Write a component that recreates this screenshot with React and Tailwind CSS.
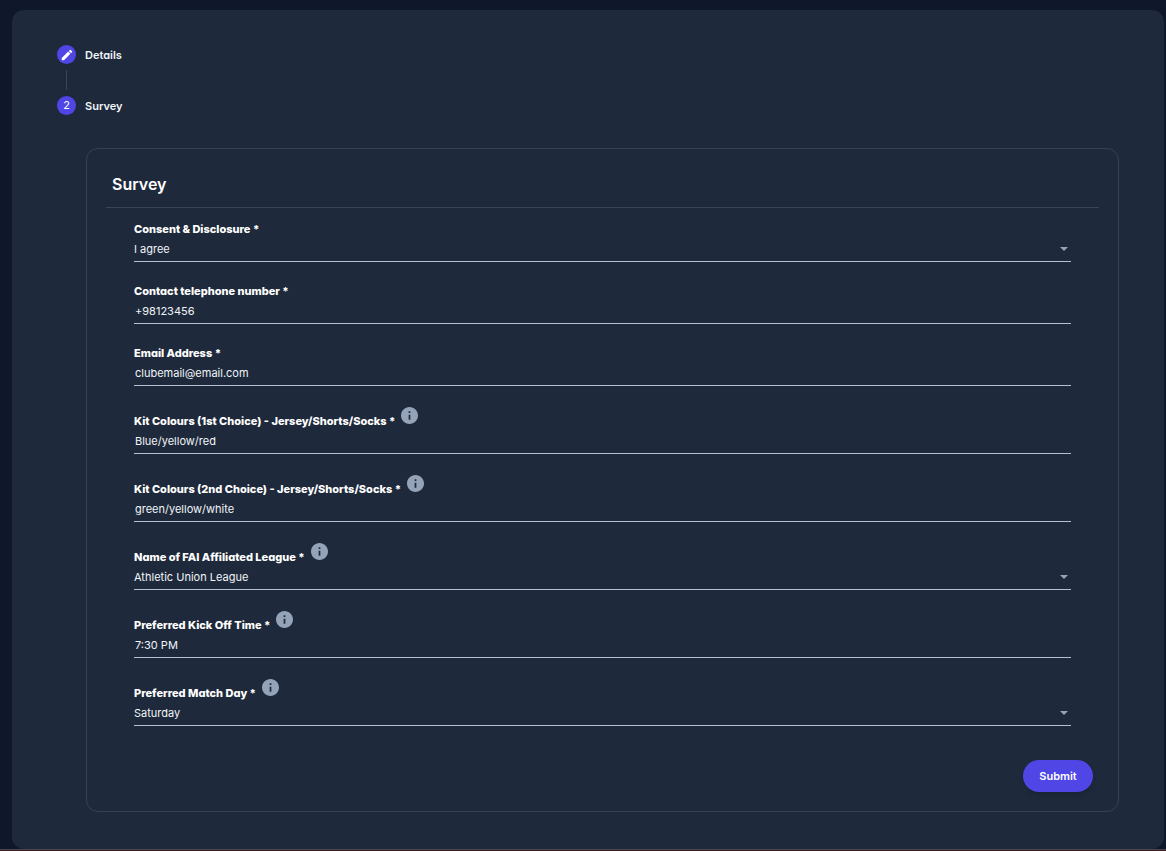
import React, { useState } from 'react';

const fields = [
  { id: 'consent', label: 'Consent & Disclosure', type: 'select', value: 'I agree', options: ['I agree', 'I do not agree'] },
  { id: 'phone', label: 'Contact telephone number', type: 'tel', value: '+98123456' },
  { id: 'email', label: 'Email Address', type: 'email', value: 'clubemail@email.com' },
  { id: 'kitFirst', label: 'Kit Colours (1st Choice) - Jersey/Shorts/Socks', type: 'text', value: 'Blue/yellow/red', info: true },
  { id: 'kitSecond', label: 'Kit Colours (2nd Choice) - Jersey/Shorts/Socks', type: 'text', value: 'green/yellow/white', info: true },
  { id: 'league', label: 'Name of FAI Affiliated League', type: 'select', value: 'Athletic Union League', options: ['Athletic Union League'], info: true },
  { id: 'kickOff', label: 'Preferred Kick Off Time', type: 'text', value: '7:30 PM', info: true },
  { id: 'matchDay', label: 'Preferred Match Day', type: 'select', value: 'Saturday', options: ['Saturday', 'Sunday'], info: true },
];

const InfoIcon = () => (
  <svg viewBox="2 2 20 20" className="w-[17px] h-[17px] shrink-0 text-[#94a3b8]" fill="currentColor" aria-hidden="true">
    <path d="M12 2C6.48 2 2 6.48 2 12s4.48 10 10 10 10-4.48 10-10S17.52 2 12 2zm1 15h-2v-6h2v6zm0-8h-2V7h2v2z" />
  </svg>
);

const PencilIcon = () => (
  <svg viewBox="0 0 24 24" className="w-[14px] h-[14px]" fill="currentColor" aria-hidden="true">
    <path d="M3 17.25V21h3.75L17.81 9.94l-3.75-3.75L3 17.25zM20.71 7.04a.996.996 0 0 0 0-1.41l-2.34-2.34a.996.996 0 0 0-1.41 0l-1.83 1.83 3.75 3.75 1.83-1.83z" />
  </svg>
);

const Step = ({ icon, label }) => (
  <li className="flex items-center gap-[9px] h-[19px]">
    <span className="flex items-center justify-center w-[19px] h-[19px] rounded-full bg-[#4f46e5] text-white text-[11px]">
      {icon}
    </span>
    <span className="text-[11px] leading-5 font-semibold [font-feature-settings:'cv11']">{label}</span>
  </li>
);

const Field = ({ field, value, onChange }) => (
  <div>
    <div className={field.info ? 'flex gap-[6px] h-[23px]' : 'flex h-[17px]'}>
      <label
        htmlFor={field.id}
        className="self-end text-[11px] leading-[17px] font-extrabold text-white [font-feature-settings:'cv11']"
      >
        {field.label} *
      </label>
      {field.info && <InfoIcon />}
    </div>
    <div className="relative h-6 border-b border-[#b4c0ce]">
      {field.type === 'select' ? (
        <>
          <select
            id={field.id}
            value={value}
            onChange={(e) => onChange(field.id, e.target.value)}
            className="block w-full h-[22px] appearance-none bg-transparent text-[11px] focus:outline-none"
          >
            {field.options.map((option) => (
              <option key={option} value={option}>{option}</option>
            ))}
          </select>
          <svg viewBox="0 0 8 4" className="absolute right-[3px] top-[9px] w-2 h-1 pointer-events-none text-[#94a3b8]" fill="currentColor">
            <path d="M0 0h8L4 4z" />
          </svg>
        </>
      ) : (
        <input
          id={field.id}
          type={field.type}
          value={value}
          onChange={(e) => onChange(field.id, e.target.value)}
          className="block w-full h-[22px] px-px bg-transparent text-[11px] focus:outline-none"
        />
      )}
    </div>
  </div>
);

const App = () => {
  const [values, setValues] = useState(Object.fromEntries(fields.map((f) => [f.id, f.value])));

  const handleChange = (id, value) => {
    setValues({ ...values, [id]: value });
  };

  return (
    <div className="min-h-screen bg-[#0f172a] pt-[10px] pl-3 pr-[2px] font-['Inter',sans-serif] text-[#f1f5f9]">
      <main className="rounded-xl bg-[#1e293b] pt-[35px] pb-[37px] pl-[45px] pr-[45px]">
        <ol>
          <Step icon={<PencilIcon />} label="Details" />
          <li aria-hidden="true" className="h-8 ml-[9px] py-[6px]">
            <div className="w-px h-full bg-[#3a4657]" />
          </li>
          <Step icon="2" label="Survey" />
        </ol>

        <form
          className="mt-[33px] ml-[29px] rounded-xl border border-[#364253] px-[19px] pb-[19px]"
          onSubmit={(e) => e.preventDefault()}
        >
          <h2 className="h-[59px] pt-[23px] pl-[6px] border-b border-[#3a4657] text-[16px] leading-6 font-semibold text-white">
            Survey
          </h2>
          <div className="flex flex-col gap-[21px] px-7 pt-[13px]">
            {fields.map((field) => (
              <Field key={field.id} field={field} value={values[field.id]} onChange={handleChange} />
            ))}
          </div>
          <div className="flex justify-end mt-[34px] pr-[6px]">
            <button
              type="submit"
              className="h-8 w-[70px] rounded-full bg-[#4f46e5] text-[11px] font-semibold text-white shadow-md hover:bg-[#4338ca]"
            >
              Submit
            </button>
          </div>
        </form>
      </main>
      <div className="h-[2px] -ml-3 -mr-[2px] border-t border-[#4a4650] bg-[#401d24]" />
    </div>
  );
};

export default App;
